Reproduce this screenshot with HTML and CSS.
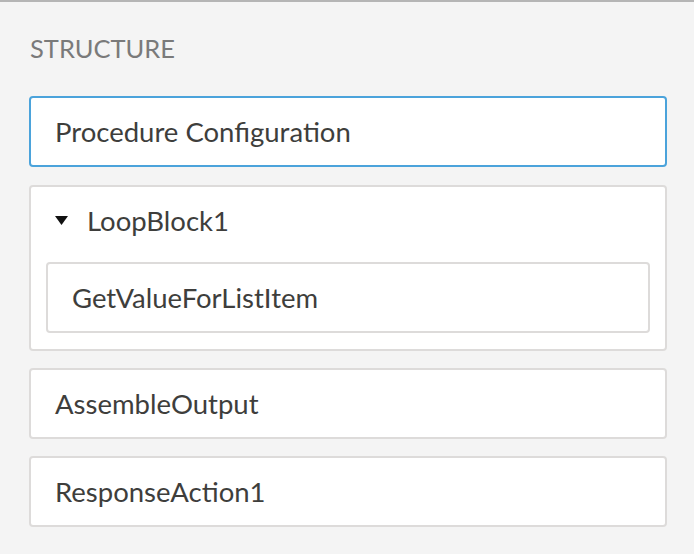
FILE: index.html
```html
<!DOCTYPE html>
<html>
<head>
<title>Structure</title>
<link rel="stylesheet" href="styles.css">
</head>
<body>
  <div class="panel">
    <h2 class="panel-title">STRUCTURE</h2>

    <div class="step step-selected">Procedure Configuration</div>

    <div class="step block">
      <div class="block-header">
        <svg class="caret" width="13" height="10" viewBox="0 0 13 10"><path d="M0 0 L13 0 L6.5 9 Z" fill="#111"/></svg>
        <span>LoopBlock1</span>
      </div>
      <div class="step child">GetValueForListItem</div>
    </div>

    <div class="step">AssembleOutput</div>
    <div class="step">ResponseAction1</div>
  </div>
</body>
</html>
```

FILE: styles.css
```css
body {
  margin: 0;
  padding: 0;
  background-color: #f4f4f4;
  font-family: Lato, "Liberation Sans", sans-serif;
  color: #3e3e3c;
}
.panel {
  border-top: 2px solid #b5b5b5;
  padding: 0 27px 20px 29px;
}
.panel-title {
  margin: 0;
  padding: 29px 0 31px 1px;
  font-size: 25.5px;
  font-weight: normal;
  line-height: 34px;
  color: #7a7a7a;
}
.step {
  background-color: white;
  border: 2px solid #dddbda;
  border-radius: 4px;
  padding: 20px 24px;
  font-size: 27.5px;
  line-height: 27px;
  margin-bottom: 17px;
}
.step-selected {
  border-color: #4ba3db;
  margin-bottom: 18px;
}
.block {
  padding: 0;
}
.block-header {
  display: flex;
  align-items: center;
  padding: 20px 24px 28px 24px;
}
.caret {
  margin-right: 19px;
}
.child {
  margin: 0 15px 16px 15px;
  padding-left: 24px;
}
```
